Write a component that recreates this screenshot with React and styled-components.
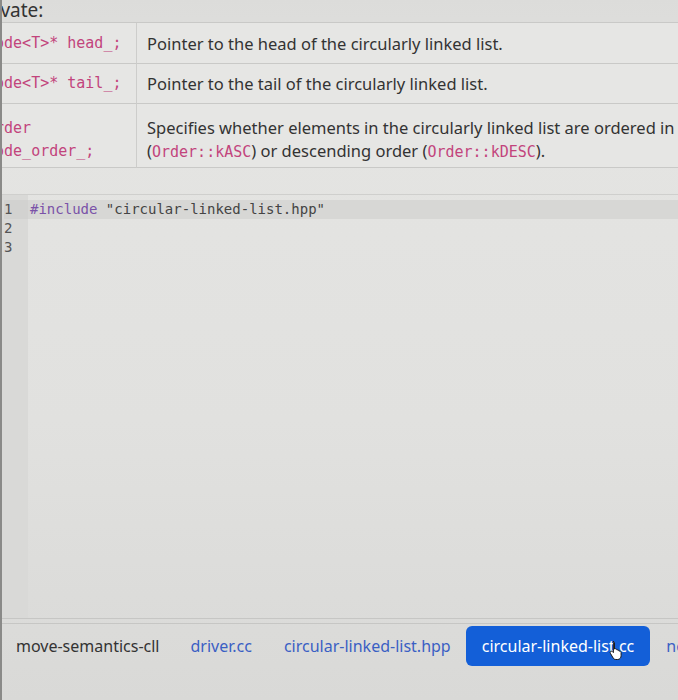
import React from 'react';
import styled, { createGlobalStyle } from 'styled-components';

const GlobalStyle = createGlobalStyle`
  html, body {
    margin: 0;
    padding: 0;
    background: #dddddb;
  }
  * { box-sizing: border-box; }
`;

const SANS = `'Noto Sans', 'Open Sans', sans-serif`;
const MONO = `'DejaVu Sans Mono', 'Liberation Mono', monospace`;

const Page = styled.div`
  position: relative;
  width: 678px;
  height: 700px;
  overflow: hidden;
  display: flex;
  flex-direction: column;
  background: linear-gradient(to bottom, #dcdcda 0%, #e4e4e2 20%, #e1e1df 60%, #d9d9d7 100%);
  font-family: ${SANS};
  color: #2e2e2e;
  border-left: 2px solid #8a8a88;
`;

const DocSection = styled.div`
  margin-left: -36px;
  width: 730px;
`;

const Heading = styled.div`
  height: 22px;
  padding-left: 10px;
  font-size: 19px;
  line-height: 20px;
  color: #333;
`;

const Table = styled.div`
  display: grid;
  grid-template-columns: 171px 1fr;
  border-top: 1px solid #c9c9c7;
  background: #e6e6e4;
`;

const Row = styled.div`
  display: contents;
`;

const Cell = styled.div`
  height: ${p => p.h}px;
  padding-top: ${p => p.pt || 0}px;
  border-bottom: 1px solid #c9c9c7;
  display: flex;
  flex-direction: column;
  justify-content: center;
  white-space: nowrap;
  overflow: hidden;
`;

const NameCell = styled(Cell)`
  border-right: 1px solid #cdcdcb;
  padding-left: 20px;
  font-family: ${MONO};
  font-size: 15px;
  line-height: 23px;
  color: #c2447c;
`;

const DescCell = styled(Cell)`
  padding-left: 10px;
  font-size: 16.5px;
  line-height: 23px;
  color: #333;
`;

const Code = styled.code`
  font-family: ${MONO};
  font-size: 15px;
  color: #c2447c;
`;

const Editor = styled.div`
  margin-top: 26px;
  padding-top: 5px;
  flex: 1;
  display: flex;
  border-top: 1px solid #cfcfcd;
  border-bottom: 1px solid #c6c6c4;
  font-family: ${MONO};
  font-size: 14px;
  line-height: 19px;
`;

const Gutter = styled.div`
  width: 26px;
  margin-top: -5px;
  padding-top: 5px;
  background: #d9d9d7;
  color: #555;
  padding-left: 2px;
`;

const Lines = styled.div`
  flex: 1;
`;

const GutterNum = styled.div`
  height: 19px;
  background: ${p => (p.active ? '#d2d2d0' : 'transparent')};
`;

const CodeLine = styled.div`
  height: 19px;
  padding-left: 2px;
  white-space: pre;
  color: #444;
  background: ${p => (p.active ? '#d7d7d5' : 'transparent')};
`;

const Keyword = styled.span`
  color: #7a52a8;
`;

const TabBar = styled.div`
  height: 77px;
  margin-top: 4px;
  border-top: 1px solid #c6c6c4;
  display: flex;
  align-items: flex-start;
  padding-top: 2px;
  white-space: nowrap;
`;

const Tab = styled.div`
  position: relative;
  height: 40px;
  padding: 0 ${p => p.pad || 16}px;
  display: flex;
  align-items: center;
  font-size: 16px;
  border-radius: 6px;
  color: ${p => (p.active ? '#ffffff' : p.muted ? '#333' : '#3a5fc4')};
  background: ${p => (p.active ? '#135fd8' : 'transparent')};
`;

const Cursor = styled.svg`
  position: absolute;
  left: 143px;
  top: 14px;
`;

const rows = [
  { h: 41, name: 'Node<T>* head_;', desc: 'Pointer to the head of the circularly linked list.' },
  { h: 40, name: 'Node<T>* tail_;', desc: 'Pointer to the tail of the circularly linked list.' },
];

export default function App() {
  return (
    <Page>
      <GlobalStyle />
      <DocSection>
        <Heading>private:</Heading>
        <Table>
          {rows.map(r => (
            <Row key={r.name}>
              <NameCell h={r.h}>{r.name}</NameCell>
              <DescCell h={r.h}>{r.desc}</DescCell>
            </Row>
          ))}
          <Row>
            <NameCell h={64} pt={8}>
              <span>Order</span>
              <span>node_order_;</span>
            </NameCell>
            <DescCell h={64} pt={8}>
              <span>Specifies whether elements in the circularly linked list are ordered in</span>
              <span>
                (<Code>Order::kASC</Code>) or descending order (<Code>Order::kDESC</Code>).
              </span>
            </DescCell>
          </Row>
        </Table>
      </DocSection>

      <Editor>
        <Gutter>
          <GutterNum active>1</GutterNum>
          <GutterNum>2</GutterNum>
          <GutterNum>3</GutterNum>
        </Gutter>
        <Lines>
          <CodeLine active>
            <Keyword>#include</Keyword> "circular-linked-list.hpp"
          </CodeLine>
          <CodeLine> </CodeLine>
          <CodeLine> </CodeLine>
        </Lines>
      </Editor>

      <TabBar>
        <Tab muted pad={14}>move-semantics-cll</Tab>
        <Tab pad={17}>driver.cc</Tab>
        <Tab pad={15}>circular-linked-list.hpp</Tab>
        <Tab active pad={16}>
          circular-linked-list.cc
          <Cursor width="16" height="20" viewBox="0 0 16 20">
            <path
              d="M4 1.5c.9 0 1.5.6 1.5 1.5v6l.6-.2c.8-.2 1.5.2 1.7.9l.1.3.5-.1c.8-.1 1.4.3 1.6 1l.1.3.4-.1c.9-.1 1.6.5 1.6 1.4v3.2c0 2-1.3 3.8-3.4 3.8H6.8c-1.1 0-2-.5-2.6-1.4L1.4 13.3c-.4-.7-.2-1.5.4-1.9.6-.4 1.3-.3 1.7.2l.9 1V3c0-.9-.3-1.5.6-1.5z"
              fill="#ffffff"
              stroke="#1a1a1a"
              strokeWidth="1"
            />
          </Cursor>
        </Tab>
        <Tab pad={16}>next</Tab>
      </TabBar>
    </Page>
  );
}
